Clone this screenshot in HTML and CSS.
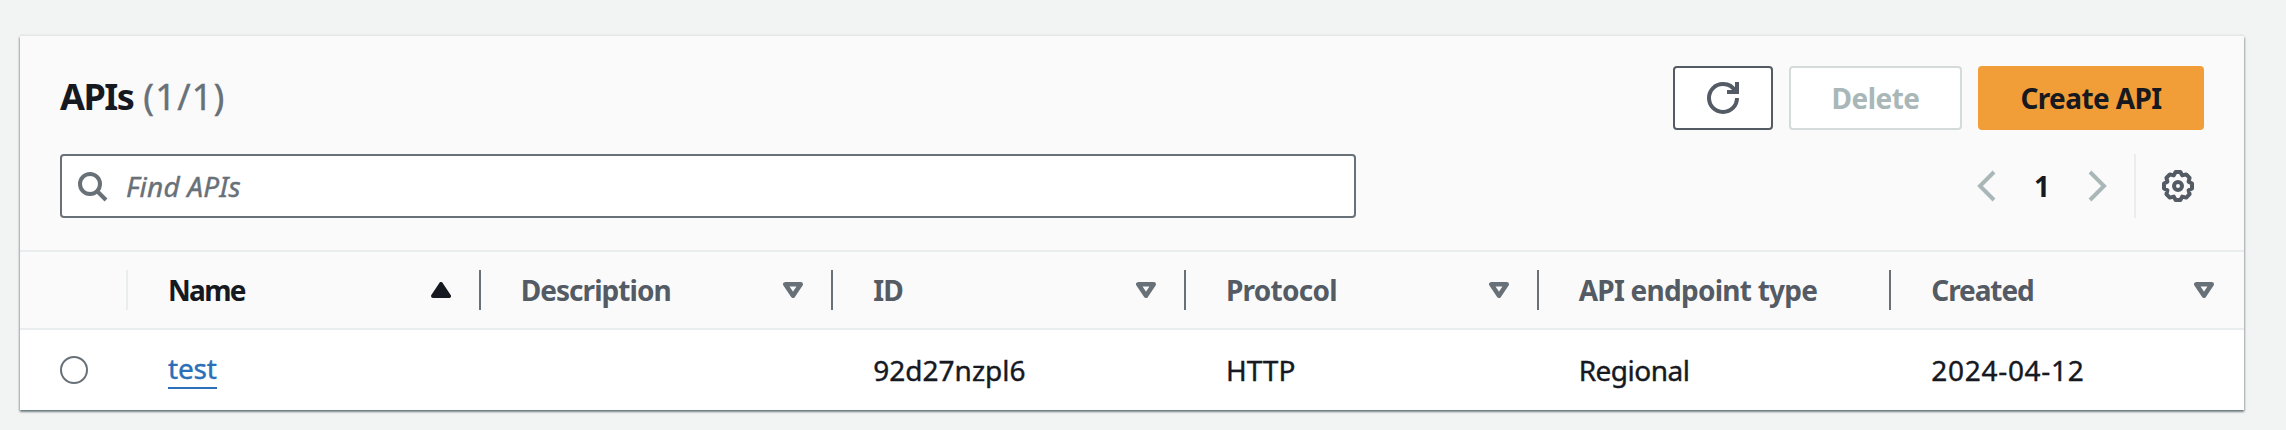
FILE: index.html
```
<!DOCTYPE html>
<html lang="en">
<head>
<meta charset="utf-8">
<title>APIs</title>
<link rel="stylesheet" href="styles.css">
</head>
<body>
<main class="card">
  <header class="card-header">
    <div class="title-row">
      <h1 class="title"><span class="title-name">APIs</span><span class="counter">(1/1)</span></h1>
      <div class="actions">
        <button class="btn btn-icon" aria-label="Refresh">
          <svg class="icon" viewBox="0 0 16 16"><path d="M10 5h5V0"/><path d="M15 8a6.957 6.957 0 0 1-7 7 6.957 6.957 0 0 1-7-7 6.957 6.957 0 0 1 7-7 6.87 6.87 0 0 1 6.3 4"/></svg>
        </button>
        <button class="btn btn-disabled" disabled><span class="t-delete">Delete</span></button>
        <button class="btn btn-primary"><span class="t-create">Create API</span></button>
      </div>
    </div>
    <div class="tools-row">
      <div class="search">
        <svg class="icon" viewBox="0 0 16 16"><circle cx="7" cy="7" r="5"/><path d="m15 15-4.5-4.5"/></svg>
        <span class="placeholder">Find APIs</span>
      </div>
      <div class="pager">
        <svg class="icon muted" viewBox="0 0 16 16"><path d="M12 1 5 8l7 7"/></svg>
        <span class="page">1</span>
        <svg class="icon muted" viewBox="0 0 16 16"><path d="m4 1 7 7-7 7"/></svg>
        <div class="prefs">
          <svg class="icon" viewBox="0 0 16 16"><path stroke-linejoin="round" d="M6.8 1h2.4l.9 1.700 2-.5 1.700 1.700-.5 2 1.700.9v2.400l-1.700.9.5 2-1.700 1.700-2-.5-.9 1.700H6.800l-.9-1.700-2 .5-1.700-1.700.5-2L1 9.200V6.800l1.700-.9-.5-2 1.700-1.700 2 .5z"/><circle cx="8" cy="8" r="2"/></svg>
        </div>
      </div>
    </div>
  </header>
  <div class="row head">
    <div class="cell select"></div>
    <div class="cell sorted"><span class="t-name">Name</span><svg class="sort" viewBox="0 0 20 16"><path class="solid" d="M10 2 18 14H2z"/></svg></div>
    <div class="cell"><span class="t-desc">Description</span><svg class="sort" viewBox="0 0 20 16"><path d="M2.300 2.300h15.400L10 13.700z"/></svg></div>
    <div class="cell"><span class="t-id">ID</span><svg class="sort" viewBox="0 0 20 16"><path d="M2.300 2.300h15.400L10 13.700z"/></svg></div>
    <div class="cell"><span class="t-proto">Protocol</span><svg class="sort" viewBox="0 0 20 16"><path d="M2.300 2.300h15.400L10 13.700z"/></svg></div>
    <div class="cell"><span class="t-type">API endpoint type</span></div>
    <div class="cell"><span class="t-created">Created</span><svg class="sort" viewBox="0 0 20 16"><path d="M2.300 2.300h15.400L10 13.700z"/></svg></div>
  </div>
  <div class="row body">
    <div class="cell select"><span class="radio"></span></div>
    <div class="cell"><a class="link">test</a></div>
    <div class="cell"></div>
    <div class="cell"><span class="v-id">92d27nzpl6</span></div>
    <div class="cell"><span class="v-http">HTTP</span></div>
    <div class="cell"><span class="v-region">Regional</span></div>
    <div class="cell"><span class="v-date">2024-04-12</span></div>
  </div>
</main>
</body>
</html>
```
FILE: styles.css
```
* { box-sizing: border-box; }
body {
  margin: 0;
  padding: 36px 42px 20px 20px;
  background: #f2f3f3;
  color: #16191f;
  font: 400 28px/40px "Noto Sans", "Open Sans", sans-serif;
}
.card {
  height: 374px;
  background: #fff;
  box-shadow: 0 2px 2px 0 rgba(0, 28, 36, .4), 1px 1px 2px 0 rgba(0, 28, 36, .2), -1px 1px 2px 0 rgba(0, 28, 36, .2), 0 -2px 0 0 #eaeded;
}
.card-header {
  height: 216px;
  padding: 30px 40px 0;
  background: #fafafa;
  border-bottom: 2px solid #eaeded;
}
.title-row, .tools-row, .actions, .pager, .search, .title, .cell { display: flex; align-items: center; }
.title-row { height: 64px; justify-content: space-between; }
.title { margin: 0; padding-bottom: 3px; font-size: 36px; line-height: 44px; gap: 10px; }
.title-name { letter-spacing: -1.5px; }
.counter { color: #687078; font-weight: 400; letter-spacing: 1.2px; }
.counter, .placeholder, .link, .body span { -webkit-text-stroke: .4px; }
.actions { gap: 16px; }
.btn {
  height: 64px;
  display: flex;
  align-items: center;
  justify-content: center;
  padding: 0;
  background: #fff;
  border: 2px solid #545b64;
  border-radius: 4px;
  color: #545b64;
  font: 700 28px/40px "Noto Sans", sans-serif;
}
.btn-icon { width: 100px; }
.btn-disabled { width: 173px; border-color: #d5dbdb; color: #aab7b8; }
.btn-primary { width: 226px; border-color: #f29e38; background: #f29e38; color: #16191f; }
.icon { width: 32px; height: 32px; flex: none; fill: none; stroke: #545b64; stroke-width: 2; overflow: visible; }
.muted { stroke: #aab7b8; }
.tools-row { height: 64px; margin-top: 24px; justify-content: space-between; }
.search {
  width: 1296px;
  height: 64px;
  padding-left: 14px;
  gap: 18px;
  background: #fff;
  border: 2px solid #687078;
  border-radius: 4px;
  color: #687078;
}
.search .icon { stroke: #687078; }
.placeholder { font-style: italic; letter-spacing: .2px; }
.page { width: 80px; text-align: center; font-weight: 700; }
.prefs { height: 64px; margin-left: 20px; padding: 16px 10px 16px 26px; border-left: 2px solid #eaeded; }
.prefs .icon { display: block; }
.row { display: grid; grid-template-columns: 108px repeat(6, 1fr); }
.cell { position: relative; padding: 0 30px 0 40px; justify-content: space-between; white-space: nowrap; }
.head { height: 78px; background: #fafafa; border-bottom: 2px solid #eaeded; color: #545b64; font-weight: 700; }
.head .cell:not(:last-child)::after { content: ""; position: absolute; right: 0; top: 18px; width: 2px; height: 40px; background: #687078; }
.head .select.cell::after { background: #eaeded; }
.head .sorted { color: #16191f; }
.sort { width: 20px; height: 16px; flex: none; fill: none; stroke: #687078; stroke-width: 4.6; stroke-linejoin: round; }
.solid { fill: #16191f; stroke: #16191f; stroke-width: 4; }
.body { height: 80px; }
.body .cell:not(.select) { padding-bottom: 1px; }
.radio { width: 28px; height: 28px; border: 2px solid #687078; border-radius: 50%; background: #fff; }
.link { color: #2a6fb8; border-bottom: 2px solid #2a6fb8; line-height: 37px; letter-spacing: -.2px; }
.t-name { letter-spacing: -1.7px; }
.t-desc { letter-spacing: -.95px; }
.t-id { letter-spacing: -1px; }
.t-proto { letter-spacing: -.75px; }
.t-type { letter-spacing: -.75px; }
.t-created { letter-spacing: -1.1px; }
.t-delete { letter-spacing: -.5px; }
.t-create { letter-spacing: -.6px; }
.v-region { letter-spacing: -.5px; }
.v-date { letter-spacing: .7px; }
```
